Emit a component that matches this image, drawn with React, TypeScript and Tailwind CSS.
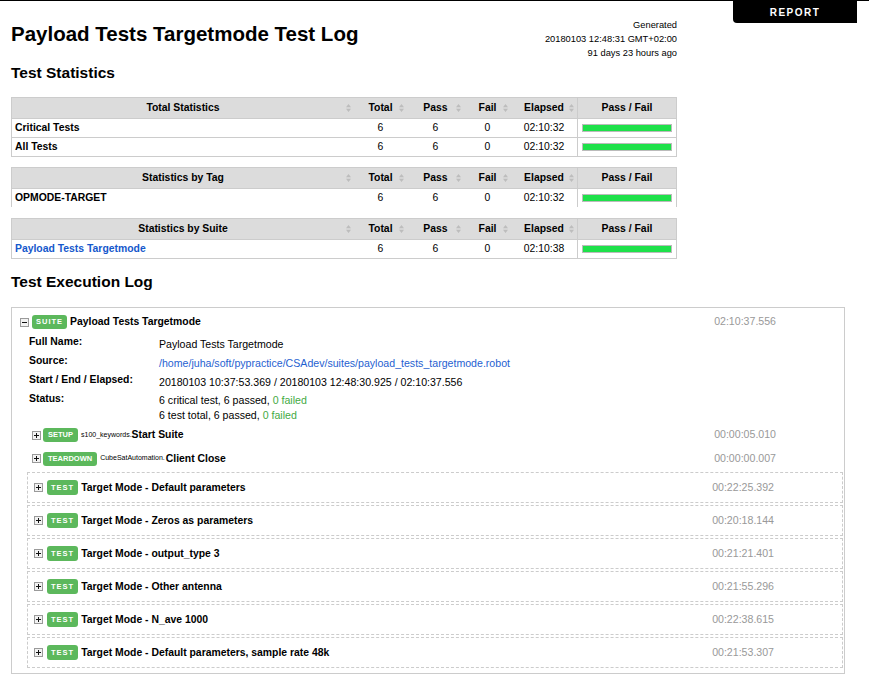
import React from 'react';

const FONT = "font-['Liberation_Sans',Arial,Helvetica,sans-serif]";
const COLS = 'grid grid-cols-[342px_53px_57px_47px_66px_99px]';

type StatRow = {
  name: string;
  total: number;
  pass: number;
  fail: number;
  elapsed: string;
  link?: boolean;
};

const tests = [
  { name: 'Target Mode - Default parameters', elapsed: '00:22:25.392' },
  { name: 'Target Mode - Zeros as parameters', elapsed: '00:20:18.144' },
  { name: 'Target Mode - output_type 3', elapsed: '00:21:21.401' },
  { name: 'Target Mode - Other antenna', elapsed: '00:21:55.296' },
  { name: 'Target Mode - N_ave 1000', elapsed: '00:22:38.615' },
  { name: 'Target Mode - Default parameters, sample rate 48k', elapsed: '00:21:53.307' },
];

function SortIcon() {
  return (
    <svg
      width="5"
      height="8"
      viewBox="0 0 5 8"
      className="absolute right-[3px] top-1/2 -translate-y-1/2"
    >
      <path d="M0 3.2L2.5 0L5 3.2Z M0 4.8L2.5 8L5 4.8Z" fill="#bdbdbd" />
    </svg>
  );
}

function HeadCell({ label }: { label: string }) {
  return (
    <div className="relative flex items-center justify-center">
      {label}
      <SortIcon />
    </div>
  );
}

function PassBar() {
  return (
    <div className="flex items-center border-l border-[#ccc] px-[4px]">
      <div className="h-[8px] w-full border border-[#bbb] bg-[#1ee14a]" />
    </div>
  );
}

function StatTable({ title, rows, bottom = true }: { title: string; rows: StatRow[]; bottom?: boolean }) {
  return (
    <div className={`w-[666px] border-x border-t border-[#ccc] ${bottom ? 'border-b' : ''}`}>
      <div className={`${COLS} h-[20px] bg-[#dcdcdc] text-[10.4px] font-bold`}>
        <HeadCell label={title} />
        <HeadCell label="Total" />
        <HeadCell label="Pass" />
        <HeadCell label="Fail" />
        <HeadCell label="Elapsed" />
        <div className="flex items-center justify-center border-l border-[#ccc]">Pass / Fail</div>
      </div>
      {rows.map((r) => (
        <div key={r.name} className={`${COLS} h-[19px] border-t border-[#ccc] text-[10.4px]`}>
          <div className={`flex items-center pl-[3px] font-bold ${r.link ? 'text-[#1558cc]' : ''}`}>{r.name}</div>
          <div className="flex items-center justify-center">{r.total}</div>
          <div className="flex items-center justify-center">{r.pass}</div>
          <div className="flex items-center justify-center">{r.fail}</div>
          <div className="flex items-center justify-center">{r.elapsed}</div>
          <PassBar />
        </div>
      ))}
    </div>
  );
}

function Toggle({ open }: { open?: boolean }) {
  return (
    <svg width="9" height="9" viewBox="0 0 9 9" className="shrink-0">
      <rect x="0.5" y="0.5" width="8" height="8" fill="#f2f2f2" stroke="#9a9a9a" />
      <path d="M2 4.5H7" stroke="#111" />
      {!open && <path d="M4.5 2V7" stroke="#111" />}
    </svg>
  );
}

function Badge({ children, className = '' }: { children: React.ReactNode; className?: string }) {
  return (
    <span
      className={`flex shrink-0 items-center justify-center rounded-[3px] bg-[#5cb85c] font-bold text-white ${className}`}
    >
      {children}
    </span>
  );
}

function MetaRow({ label, children, last }: { label: string; children: React.ReactNode; last?: boolean }) {
  return (
    <div className={`flex items-start ${last ? '' : 'h-[19px]'}`}>
      <div className="w-[130px] shrink-0 pt-[3px] text-[10.4px] font-bold leading-[16px]">{label}</div>
      <div className={`text-[10.6px] ${last ? 'pt-[5px] leading-[15px]' : 'pt-[5px] leading-[16px]'}`}>{children}</div>
    </div>
  );
}

export default function App() {
  return (
    <div className={`relative min-h-[685px] border-t border-black bg-white pl-[11px] text-black ${FONT}`}>
      <div className="absolute right-[12px] top-0 flex h-[22px] w-[124px] items-center justify-center rounded-bl-[4px] bg-black text-[10px] font-bold tracking-[1.5px] text-white">
        REPORT
      </div>

      <div className="flex w-[666px] items-start justify-between">
        <h1 className="mt-[21px] text-[20.5px] font-bold leading-[24px]">Payload Tests Targetmode Test Log</h1>
        <div className="mt-[17px] text-right text-[9.3px] leading-[14px]">
          <div>Generated</div>
          <div>20180103 12:48:31 GMT+02:00</div>
          <div>91 days 23 hours ago</div>
        </div>
      </div>

      <h2 className="mt-[3px] text-[15.5px] font-bold leading-[20px]">Test Statistics</h2>

      <div className="mt-[14px]">
        <StatTable
          title="Total Statistics"
          rows={[
            { name: 'Critical Tests', total: 6, pass: 6, fail: 0, elapsed: '02:10:32' },
            { name: 'All Tests', total: 6, pass: 6, fail: 0, elapsed: '02:10:32' },
          ]}
        />
      </div>
      <div className="mt-[10px]">
        <StatTable
          title="Statistics by Tag"
          bottom={false}
          rows={[{ name: 'OPMODE-TARGET', total: 6, pass: 6, fail: 0, elapsed: '02:10:32' }]}
        />
      </div>
      <div className="mt-[11px]">
        <StatTable
          title="Statistics by Suite"
          rows={[{ name: 'Payload Tests Targetmode', total: 6, pass: 6, fail: 0, elapsed: '02:10:38', link: true }]}
        />
      </div>

      <h2 className="mt-[13px] text-[15.5px] font-bold leading-[20px]">Test Execution Log</h2>

      <div className="mt-[15px] w-[834px] border border-[#ccc] pb-[5px] pt-[5px]">
        <div className="flex h-[18px] items-center pl-[8px] pr-[68px]">
          <Toggle open />
          <Badge className="ml-[3px] h-[14px] px-[4px] text-[7.5px] tracking-[1px]">SUITE</Badge>
          <span className="ml-[3px] text-[10.4px] font-bold">Payload Tests Targetmode</span>
          <span className="ml-auto text-[10.6px] text-[#999]">02:10:37.556</span>
        </div>

        <div className="pl-[17px]">
          <MetaRow label="Full Name:">Payload Tests Targetmode</MetaRow>
          <MetaRow label="Source:">
            <span className="text-[#1f5fd1]">/home/juha/soft/pypractice/CSAdev/suites/payload_tests_targetmode.robot</span>
          </MetaRow>
          <MetaRow label="Start / End / Elapsed:">20180103 10:37:53.369 / 20180103 12:48:30.925 / 02:10:37.556</MetaRow>
          <MetaRow label="Status:" last>
            <div>
              6 critical test, 6 passed, <span className="text-[#44aa44]">0 failed</span>
            </div>
            <div>
              6 test total, 6 passed, <span className="text-[#44aa44]">0 failed</span>
            </div>
          </MetaRow>
        </div>

        <div className="flex h-[24px] items-center pl-[20px] pr-[68px]">
          <Toggle />
          <Badge className="ml-[2px] h-[14px] px-[5px] text-[7.5px]">SETUP</Badge>
          <span className="ml-[3px] text-[7px]">s100_keywords.</span>
          <span className="text-[10.4px] font-bold">Start Suite</span>
          <span className="ml-auto text-[10.6px] text-[#999]">00:00:05.010</span>
        </div>
        <div className="flex h-[23px] items-center pl-[20px] pr-[68px]">
          <Toggle />
          <Badge className="ml-[2px] h-[14px] px-[5px] text-[7.5px]">TEARDOWN</Badge>
          <span className="ml-[3px] text-[7px]">CubeSatAutomation.</span>
          <span className="ml-[1px] text-[10.4px] font-bold">Client Close</span>
          <span className="ml-auto text-[10.6px] text-[#999]">00:00:00.007</span>
        </div>

        <div className="ml-[15px] mr-[1px] mt-[2px] flex flex-col gap-[2px]">
          {tests.map((t) => (
            <div
              key={t.name}
              className="flex h-[31px] items-center border border-dashed border-[#ccc] pl-[6px] pr-[68px]"
            >
              <Toggle />
              <Badge className="ml-[4px] h-[15px] px-[4px] text-[7.5px] tracking-[1px]">TEST</Badge>
              <span className="ml-[3px] text-[10.4px] font-bold">{t.name}</span>
              <span className="ml-auto text-[10.6px] text-[#999]">{t.elapsed}</span>
            </div>
          ))}
        </div>
      </div>
    </div>
  );
}
